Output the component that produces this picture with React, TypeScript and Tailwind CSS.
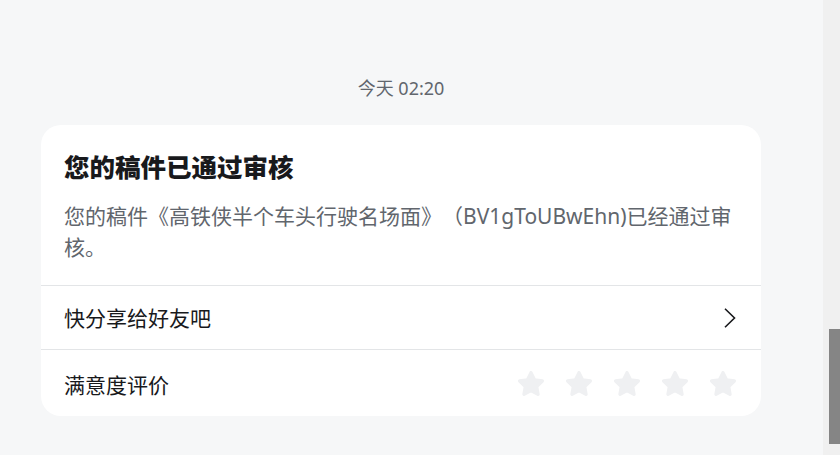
import React from "react";

const Star = () => (
  <svg width="26" height="25" viewBox="1.8 1.3 20.4 19.6">
    <path
      d="M12 2.6l2.75 5.6 6.15.9-4.45 4.35 1.05 6.15L12 16.7l-5.5 2.9 1.05-6.15L3.1 9.1l6.15-.9z"
      fill="#eff0f2"
      stroke="#eff0f2"
      strokeWidth="2.6"
      strokeLinejoin="round"
    />
  </svg>
);

const App = () => {
  const stars = [1, 2, 3, 4, 5];

  return (
    <div
      className="flex h-[455px] w-full overflow-hidden bg-[#f6f7f8] [text-spacing-trim:space-all]"
      style={{ fontFamily: '"Noto Sans", "Noto Sans CJK SC", sans-serif' }}
    >
      <div className="flex-1 pl-[41px] pt-[76px]">
        <div className="w-[720px] text-center text-[18px] leading-[24px] text-[#61666d]">
          今天 02:20
        </div>

        <div className="mt-[25px] w-[720px] rounded-[20px] bg-white">
          <div className="px-[23px] pt-[25px] pb-[22px]">
            <div className="text-[25.5px] font-black leading-[34px] text-[#18191c]">
              您的稿件已通过审核
            </div>
            <div className="mt-[17px] text-[21px] leading-[31px] text-[#61666d]">
              您的稿件《高铁侠半个车头行驶名场面》（BV1gToUBwEhn)已经通过审核。
            </div>
          </div>

          <div className="flex h-[64px] items-center justify-between border-t border-[#e3e5e7] px-[23px]">
            <span className="text-[21px] leading-[30px] text-[#18191c]">快分享给好友吧</span>
            <svg width="14" height="20" viewBox="0 0 14 20" fill="none">
              <path d="M1 0.8L10.5 10L1 19.2" stroke="#18191c" strokeWidth="1.6" />
            </svg>
          </div>

          <div className="flex h-[67px] items-center justify-between border-t border-[#e3e5e7] pl-[23px] pr-[25px]">
            <span className="mt-[3px] text-[21px] leading-[30px] text-[#18191c]">满意度评价</span>
            <div className="flex gap-[22px]">
              {stars.map((s) => (
                <Star key={s} />
              ))}
            </div>
          </div>
        </div>
      </div>

      <div className="w-[17px] bg-[#f0f0f0] pl-[6px] pt-[329px]">
        <div className="h-[115px] w-[11px] bg-[#858585]" />
      </div>
    </div>
  );
};

export default App;
